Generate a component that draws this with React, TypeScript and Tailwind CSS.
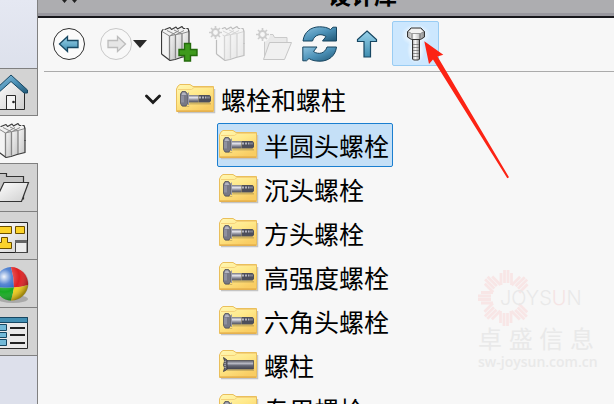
import type { ReactNode } from 'react';

const fasteners = [
  { name: '半圆头螺栓', kind: 'bolt', selected: true },
  { name: '沉头螺栓', kind: 'bolt' },
  { name: '方头螺栓', kind: 'bolt' },
  { name: '高强度螺栓', kind: 'bolt' },
  { name: '六角头螺栓', kind: 'bolt' },
  { name: '螺柱', kind: 'stud' },
  { name: '专用螺栓', kind: 'bolt' },
];

const Gradients = () => (
  <svg className="absolute w-0 h-0" aria-hidden="true">
    <defs>
      <linearGradient id="blue" x1="0" y1="0" x2="1" y2="1">
        <stop offset="0" stopColor="#8fc3df" />
        <stop offset="0.5" stopColor="#4d92b8" />
        <stop offset="1" stopColor="#1f5674" />
      </linearGradient>
      <linearGradient id="up" x1="0" y1="0" x2="0" y2="1">
        <stop offset="0" stopColor="#9bd4ec" />
        <stop offset="1" stopColor="#3f8db0" />
      </linearGradient>
      <linearGradient id="paper" x1="0" y1="0" x2="1" y2="1">
        <stop offset="0" stopColor="#ffffff" />
        <stop offset="1" stopColor="#cfcfcf" />
      </linearGradient>
      <linearGradient id="spine" x1="0" y1="0" x2="1" y2="1">
        <stop offset="0" stopColor="#f6f6f6" />
        <stop offset="1" stopColor="#c6c6c6" />
      </linearGradient>
      <linearGradient id="folder" x1="0" y1="0" x2="0.6" y2="1">
        <stop offset="0" stopColor="#fff7b4" />
        <stop offset="0.5" stopColor="#ffe98a" />
        <stop offset="1" stopColor="#f9cd63" />
      </linearGradient>
      <linearGradient id="steel" x1="0" y1="0" x2="0" y2="1">
        <stop offset="0" stopColor="#75767f" />
        <stop offset="0.35" stopColor="#e4e4ec" />
        <stop offset="0.65" stopColor="#8c8d99" />
        <stop offset="1" stopColor="#4c4d57" />
      </linearGradient>
      <linearGradient id="stud" x1="0" y1="0" x2="0" y2="1">
        <stop offset="0" stopColor="#5c5d68" />
        <stop offset="0.35" stopColor="#b6b7c2" />
        <stop offset="0.6" stopColor="#666876" />
        <stop offset="1" stopColor="#41424d" />
      </linearGradient>
      <linearGradient id="rod" x1="0" y1="0" x2="1" y2="0">
        <stop offset="0" stopColor="#a8a8a8" />
        <stop offset="0.4" stopColor="#fbfbfb" />
        <stop offset="1" stopColor="#8c8c8c" />
      </linearGradient>
      <radialGradient id="shine" cx="0.28" cy="0.3" r="0.75">
        <stop offset="0" stopColor="#fff" stopOpacity="0.95" />
        <stop offset="0.3" stopColor="#fff" stopOpacity="0.25" />
        <stop offset="0.6" stopColor="#fff" stopOpacity="0" />
        <stop offset="1" stopColor="#000" stopOpacity="0.35" />
      </radialGradient>
      <radialGradient id="glow">
        <stop offset="0.3" stopColor="#fff" stopOpacity="0.95" />
        <stop offset="1" stopColor="#fff" stopOpacity="0" />
      </radialGradient>
    </defs>
  </svg>
);

const Books = () => (
  <g strokeLinejoin="round">
    <path d="M0.5 5.5 8 2 10 3 14 1 16 2.500 20 0.500 22 2 28 5.500V30L20 31.500 10 34.500 0.500 28Z" fill="#f1f1f1" />
    <path d="M0.500 5.500 8.500 10V34.500L0.500 28Z" fill="#f4f4f4" />
    <path d="M8.500 10 14.500 8.500V33L10 34.500 8.500 34Z" fill="url(#spine)" />
    <path d="M14.500 8.500 21 7.500V31L14.500 32.500Z" fill="url(#spine)" />
    <path d="M21 7.500 28 5.500V29.500L21 31Z" fill="url(#spine)" />
    <path d="M8.500 10 18 4.500M14.500 9 23 4.500M1 5.500 8.500 10 14.500 8.500 21 7.500 28 5.500M6 4.500 14 8.500M13 4 20.500 7.500" fill="none" stroke="#8b8b8b" />
    <path d="M8.500 10V33.500M14.500 9V32.500M21 8V31" stroke="#858585" strokeWidth="1.300" />
    <path d="M0.500 28V5.500L2 3.500 4 3.500 9 1.500 10.500 3.500 15 1 16.500 3 21 0.500 22.500 2.500 27 2.500 28 5.500V18" fill="none" stroke="#3a3a3a" strokeWidth="1.200" strokeDasharray="22.500 0 3 1" />
    <path d="M0.500 28 9 34.500 14 33.500 20 31.500 28 29.500V17" fill="none" stroke="#3a3a3a" strokeWidth="1.200" />
  </g>
);

const Gear = () => (
  <g stroke="#cdcdcd" fill="none">
    <circle cx="6.5" cy="6.5" r="3.4" strokeWidth="2" />
    <path d="M6.5 0v3M6.5 10v3M0 6.5h3M10 6.5h3M2 2l2 2M9 9l2 2M11 2 9 4M4 9l-2 2" strokeWidth="1.7" />
  </g>
);

const FolderIcon = ({ kind }: { kind: string }) => (
  <svg className="w-10 h-8 shrink-0" viewBox="0 0 40 32" aria-hidden="true">
    <path d="M2 29.500H38.500V6" fill="none" stroke="#c4c4c4" strokeWidth="1.500" />
    <path d="M0.500 6 2 3 4 1.500H14L17 3.500H37.500V28.500H0.500Z" fill="url(#folder)" stroke="#eabf5c" />
    <path d="M2 6.500H15.500L18 4.500H37" fill="none" stroke="#f5d27a" />
    <path d="M1 28H37" stroke="#dfa443" />
    {kind === 'bolt' ? (
      <>
        <path d="M6 23H13.500V20H35V21.500H14L13 24H7Z" fill="#8c7a45" opacity="0.4" />
        <path d="M4.500 11 6 8.500H9.500L12 11.500V20L10 23H6L4.500 20.500Z" fill="#777986" stroke="#50515c" strokeWidth="0.800" />
        <path d="M5 12.500H8V19.500H5Z" fill="#8f91a0" />
        <path d="M5.500 12 6.500 9.500H9L10.500 12Z" fill="#b4b5c1" />
        <path d="M12 12H22.500V19.500H12Z" fill="url(#steel)" />
        <path d="M12.500 9.500V22" stroke="#9899a6" />
        <path d="M22.500 12H33.500L35 13.500V18L33.500 19.500H22.500Z" fill="#4d4f5b" />
        <path d="M23 14.500H30" stroke="#b3b4bf" strokeDasharray="2 1" strokeWidth="2" />
        <path d="M30 14.500H34" stroke="#7d7f8b" strokeWidth="2" />
      </>
    ) : (
      <>
        <path d="M8 20.500H35V22H8Z" fill="#8c7a45" opacity="0.4" />
        <path d="M7 11.500H34.500V20H7Z" fill="url(#stud)" stroke="#4c4d58" strokeWidth="0.800" />
        <path d="M4.500 8.500 8 11V20.500L4.500 22.500 5.500 19 4.500 16 5.500 12Z" fill="#6a6b76" stroke="#33343c" strokeWidth="0.800" />
        <path d="M6 12V19" stroke="#c5c6cf" strokeDasharray="1 1" />
      </>
    )}
  </svg>
);

type TabProps = { label: string; className: string; children: ReactNode };

const SideTab = ({ label, className, children }: TabProps) => (
  <button type="button" aria-label={label} className={`block w-full shrink-0 border-[#808080] ${className}`}>
    <svg className="block w-9 h-[46px]" viewBox="0 0 36 46" aria-hidden="true">
      {children}
    </svg>
  </button>
);

const Sidebar = () => (
  <nav className="w-[38px] shrink-0 flex flex-col bg-[#dde0eb]">
    <div className="h-[68px] shrink-0 border-r border-[#808080] bg-gradient-to-b from-[#e5e8f2] to-[#dde1ec]" />
    <SideTab label="主页" className="h-12 border-y border-r bg-[#d3d3d3]">
      <path d="M-3 20 11 9 24.5 20V40.5H-3Z" fill="url(#paper)" stroke="#2a2a2a" />
      <path d="M6.5 40V26.5H15.5V40" fill="#f4f4f4" stroke="#2a2a2a" />
      <circle cx="13.5" cy="33" r="1.3" fill="#222" />
      <path d="M-3 19 11 6 27.5 21V24H24L11 12.5-3 25Z" fill="url(#blue)" stroke="#174762" />
    </SideTab>
    <SideTab label="设计库" className="h-[47px] bg-[#f7f7f7]">
      <g transform="translate(-3 6)">
        <Books />
      </g>
    </SideTab>
    <SideTab label="文件探索器" className="h-12 border-t border-r bg-[#d3d3d3]">
      <path d="M-3 8.500H6.500V11.500H23.500V34H-3Z" fill="#c6c6c6" stroke="#333" strokeWidth="1.2" />
      <path d="M4 17.500H28.500L21.500 36.500H-5Z" fill="url(#paper)" stroke="#333" strokeWidth="1.2" />
    </SideTab>
    <SideTab label="查看调色板" className="h-12 border-t border-r bg-[#d3d3d3]">
      <path d="M-3 9.5H27.5V39.5H-3Z" fill="url(#paper)" stroke="#222" />
      <path d="M-3 13.5H11.5V20.5H-3ZM15.5 13.5H24.5V20.5H15.5ZM1.5 24.5H7.5V29.5H11.5V35.5H-3V29.5H1.5Z" fill="#fcd32a" stroke="#6b4f00" />
      <path d="M15.5 28H27V39.5H15.5Z" fill="#ededed" stroke="#444" />
      <path d="M15 28.5H27" stroke="#666" strokeWidth="3" />
    </SideTab>
    <SideTab label="外观" className="h-12 border-t border-r bg-[#d3d3d3]">
      <ellipse cx="13" cy="38" rx="15" ry="4" fill="#8d8d8d" opacity="0.6" />
      <g transform="translate(0 -1)">
        <path d="M11 7A17 17 0 0 0-5 27Q4 28 14 27.5Q14 17 11 7Z" fill="#2361c4" />
        <path d="M11 7A17 17 0 0 1 28 25Q21 27 14 27.5Q14 17 11 7Z" fill="#df2022" />
        <path d="M-5 27Q4 28 14 27.5Q13 34 11 40.5A17 17 0 0 1-5 27Z" fill="#16aa22" />
        <path d="M28 25Q21 27 14 27.5Q13 34 11 40.5A17 17 0 0 0 28 25Z" fill="#f5cf15" />
        <circle cx="11.5" cy="23.5" r="17" fill="url(#shine)" />
      </g>
    </SideTab>
    <SideTab label="自定义属性" className="h-[49px] border-y border-r bg-[#d3d3d3]">
      <path d="M-3 8.5H27.5V39.5H-3Z" fill="#e9e9e9" stroke="#2a2a2a" />
      <path d="M-3 8.5H27.5V13.5H-3Z" fill="#428fb3" stroke="#174762" />
      <path d="M-3 15.500H6.500V21.500H-3ZM-3 23.500H6.500V28.500H-3ZM-3 30.500H6.500V36.500H-3Z" fill="#72b9d8" stroke="#174762" />
      <path d="M10 19H25M10 26H25M10 34H25" stroke="#222" strokeWidth="2" />
    </SideTab>
    <div className="flex-1 border-r border-[#808080]" />
  </nav>
);

const Toolbar = () => (
  <div role="toolbar" aria-label="工具" className="ml-1.5 h-[54px] shrink-0 flex items-center border-b border-[#ababab] pl-2 pb-[2px]">
    <button type="button" aria-label="后退">
      <svg className="block w-[34px] h-[34px]" viewBox="0 0 34 34">
        <circle cx="17" cy="17" r="15.5" fill="#fbfbfb" stroke="#303030" />
        <path d="M7.5 17 15.5 9.5V13.5H26V20.5H15.5V24.5Z" fill="url(#up)" stroke="#174762" strokeWidth="1.3" />
      </svg>
    </button>
    <button type="button" aria-label="前进" disabled className="ml-[13px]">
      <svg className="block w-[34px] h-[34px]" viewBox="0 0 34 34">
        <circle cx="17" cy="17" r="15.5" fill="#f8f8f8" stroke="#c9c9c9" />
        <path d="M26.5 17 18.5 9.5V13.5H9V20.5H18.5V24.5Z" fill="#e6e6e6" stroke="#bcbcbc" strokeWidth="1.3" />
      </svg>
    </button>
    <button type="button" aria-label="历史记录">
      <svg className="block w-4 h-2" viewBox="0 0 16 8">
        <path d="M0 0H14L7 8Z" fill="#292929" />
      </svg>
    </button>
    <button type="button" aria-label="添加到库" className="ml-3">
      <svg className="block w-[38px] h-9" viewBox="0 0 38 36">
        <Books />
        <path d="M23.5 17.5H29.5V23.5H36V29.5H29.5V35H23.5V29.5H18V23.5H23.5Z" fill="#3e9a1c" stroke="#246b0c" strokeWidth="1.4" />
      </svg>
    </button>
    <button type="button" aria-label="添加文件位置" disabled className="ml-2.5">
      <svg className="block w-[38px] h-9" viewBox="0 0 38 36">
        <g transform="translate(7 0)" opacity="0.3">
          <Books />
        </g>
        <circle cx="6.5" cy="6.5" r="7.5" fill="#f7f7f7" />
        <Gear />
      </svg>
    </button>
    <button type="button" aria-label="生成新文件夹" disabled className="ml-[9px]">
      <svg className="block w-9 h-9" viewBox="0 0 36 36">
        <path d="M8.5 32V8.5H17L18.5 11.5H31V17" fill="#e9e9e9" stroke="#cacaca" />
        <path d="M13.5 16.5H35.5L28.5 33.5H7.5Z" fill="#f0f0f0" stroke="#c6c6c6" />
        <g transform="translate(0 2)">
          <circle cx="6.5" cy="6.5" r="7.5" fill="#f7f7f7" />
          <Gear />
        </g>
      </svg>
    </button>
    <button type="button" aria-label="刷新" className="ml-2.5">
      <svg className="block w-9 h-9" viewBox="0 0 36 36">
        <path d="M1 15C2 6 9 0.8 17.5 0.8C22 0.8 25.5 1.500 28.500 3.500L31 1.200H34.500V15H20.500L24 10.500C19 7 12.500 8.500 10.500 15Z" fill="url(#blue)" stroke="#17445f" />
        <path d="M34.500 21C33.500 30 26.500 35.200 18 35.200C13.500 35.200 10 34.500 7 32.500L4.500 34.800H0.800V21H15L11.500 25.500C16.500 29 23 27.500 25 21Z" fill="url(#blue)" stroke="#17445f" />
      </svg>
    </button>
    <button type="button" aria-label="上移" className="ml-[18px]">
      <svg className="block w-[22px] h-7" viewBox="0 0 22 28">
        <path d="M11 1 20.5 9.5V11.5H14.5V27H8V11.500H1.500V9.500Z" fill="url(#up)" stroke="#174762" strokeWidth="1.2" />
      </svg>
    </button>
    <button type="button" aria-label="配置 Toolbox" className="ml-3.5 h-[45px] w-[47px] flex items-center justify-center rounded-xs border border-[#99ccf3] bg-[#cce7fe]">
      <svg className="block w-[30px] h-10" viewBox="-4 -2 30 40">
        <ellipse cx="11" cy="9" rx="15" ry="11" fill="url(#glow)" />
        <ellipse cx="11" cy="24" rx="9" ry="14" fill="url(#glow)" />
        <path d="M7.5 12H14.5V33L13.5 34H8.5L7.5 33Z" fill="url(#rod)" stroke="#333" />
        <path d="M8 18.5H14M8 21.5H14M8 24.5H14M8 27.5H14M8 30.500H14" stroke="#777" strokeWidth="0.800" />
        <path d="M2.500 5.500 6 2H16L19.500 5.500V11L15.500 13.500H6.500L2.500 11Z" fill="url(#rod)" stroke="#333" />
        <path d="M3 5.500 6.500 2.500H15.500L19 5.500 15.500 7.500H6.500Z" fill="#f1f1f1" stroke="#777" strokeWidth="0.700" />
        <path d="M7 8V13M15 8V13" stroke="#555" strokeWidth="0.800" />
      </svg>
    </button>
  </div>
);

const Tree = () => (
  <ul className="pt-1.5 text-[25px] leading-8 text-black whitespace-nowrap">
    <li>
      <button type="button" aria-expanded="true" className="h-[45px] pb-1 flex items-center pl-[107px]">
        <svg className="w-4 h-3 shrink-0" viewBox="0 0 16 12" aria-hidden="true">
          <path d="M1.500 3 8 9.500 14.500 3" fill="none" stroke="#1c1c1c" strokeWidth="2.8" strokeLinecap="round" />
        </svg>
        <span className="ml-[15px] flex items-center gap-[5px]">
          <FolderIcon kind="bolt" />
          螺栓和螺柱
        </span>
      </button>
      <ul className="pl-[179px]">
        {fasteners.map((item) => (
          <li key={item.name}>
            <button
              type="button"
              className={`h-11 flex items-center gap-[5px] rounded-xs border pl-px pr-[3px] ${
                item.selected ? 'border-[#1b7fd0] bg-[#c5e0f7]' : 'border-transparent'
              }`}
            >
              <FolderIcon kind={item.kind} />
              {item.name}
            </button>
          </li>
        ))}
      </ul>
    </li>
  </ul>
);

const Watermark = () => (
  <div className="pointer-events-none absolute right-5 top-[270px] w-[116px] whitespace-nowrap text-[#e9e9e9]">
    <svg className="absolute left-0 top-0 w-14 h-14" viewBox="-28 -28 56 56" aria-hidden="true">
      {[0, 45, 135, 180, 225, 270, 315].map((angle) => (
        <path
          key={angle}
          transform={`rotate(${angle})`}
          d="M-5 -13V-25M-1.5 -15V-28M2 -15V-28M5.5 -13V-25"
          stroke="#f8e6e6"
          strokeWidth="2.8"
        />
      ))}
    </svg>
    <div className="relative pt-4 pl-[22px] text-[20px] leading-6 font-light font-['Inter',sans-serif]">
      JOYS<span className="text-[#f5e4e4]">U</span>N
    </div>
    <div className="mt-2.5 flex justify-between text-[24px] leading-9">
      <span>卓</span>
      <span>盛</span>
      <span>信</span>
      <span>息</span>
    </div>
    <div className="-mt-1 text-[14px] leading-5 font-semibold font-['Open_Sans',sans-serif]">sw-joysun.com.cn</div>
  </div>
);

const App = () => {
  return (
    <div className="relative h-screen flex overflow-hidden bg-[#f7f7f7] font-['Noto_Sans_CJK_SC',sans-serif]">
      <Gradients />
      <Sidebar />
      <main className="flex-1 min-w-0 flex flex-col">
        <header className="h-[18px] shrink-0 border-b-2 border-[#17171b] bg-[#adadb0]">
          <div className="relative h-4 border-b-[3px] border-[#98979e]">
            <svg className="absolute left-6 top-0 w-4 h-3" viewBox="0 0 16 12" aria-hidden="true">
              <path d="M0 0H5L2.5 3ZM10 0H15L12.5 3Z" fill="#222" />
            </svg>
            <h1 className="absolute inset-x-0 bottom-[5px] pl-[73px] text-center text-[23px] leading-7 font-bold text-black">设计库</h1>
          </div>
        </header>
        <Toolbar />
        <Tree />
      </main>
      <Watermark />
      <svg className="pointer-events-none absolute left-[423px] top-10 w-[88px] h-[140px]" viewBox="0 0 88 140" aria-hidden="true">
        <path d="M1.3 1.3 20.3 14.7 14.5 16.5 86 137.3 84.3 138.3 10 19.5 6 24Z" fill="#fc2314" />
      </svg>
    </div>
  );
};

export default App;
